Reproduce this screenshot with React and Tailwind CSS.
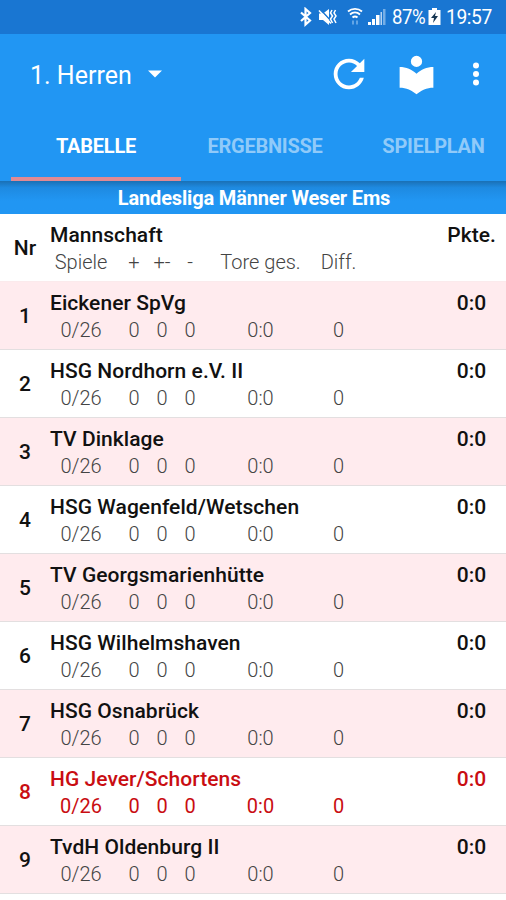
const teams = [
  "Eickener SpVg",
  "HSG Nordhorn e.V. II",
  "TV Dinklage",
  "HSG Wagenfeld/Wetschen",
  "TV Georgsmarienhütte",
  "HSG Wilhelmshaven",
  "HSG Osnabrück",
  "HG Jever/Schortens",
  "TvdH Oldenburg II",
];

function StatusBar() {
  return (
    <div className="flex h-[34px] items-center bg-[#1976d2] pl-[299px] text-white">
      <svg className="h-[20px] w-[14px] shrink-0" viewBox="0 0 14 20" fill="none" stroke="#fff" strokeWidth="2.2">
        <path d="M2 5.500l9 8-4.500 4V2l4.500 4-9 8" />
      </svg>
      <svg className="ml-[5px] h-[20px] w-[20px] shrink-0" viewBox="0 0 20 20" fill="#fff">
        <path d="M1 6.500h4l6-4.500v16l-6-5H1z" />
        <path d="M2 2l11 12" stroke="#1976d2" strokeWidth="1.400" />
        <path d="M1 3.500L13 16.500" stroke="#fff" strokeWidth="1.600" />
        <path d="M14 3l-1.500 3 2 3-2 3 2 4M17.500 3L16 6l2 3-2 3 2 4" fill="none" stroke="#fff" strokeWidth="1.500" />
      </svg>
      <svg className="ml-[9px] h-[20px] w-[16px] shrink-0" viewBox="0 0 16 20" fill="none" stroke="#fff" strokeWidth="1.900">
        <path d="M1 4.500c4-3.500 10-3.500 14 0M3 7.500c3-2.600 7-2.600 10 0M5.500 10.500c1.500-1.300 3.500-1.300 5 0" />
        <path d="M6 13.500v4M10 13.500v4" stroke="#63a5e6" strokeWidth="2" />
      </svg>
      <svg className="ml-[5px] h-[20px] w-[18px] shrink-0" viewBox="0 0 18 20" fill="#fff">
        <path d="M0 15h3v3H0zM4 12h3v6H4zM8 8h3.500v10H8z" />
        <path d="M12.500 5H14v13h-1.500z" fill="#b5d4f3" />
        <path d="M15 2h2.500v16H15z" fill="#75aee6" />
      </svg>
      <span className="ml-[6px] w-[35px] origin-left scale-x-[0.93] text-[20px] leading-[35px] tracking-[-0.500px]">87%</span>
      <svg className="ml-[1px] h-[20px] w-[13px] shrink-0" viewBox="0 0 13 20" fill="#fff">
        <path d="M4 1h5v2h3.500v15H0.500V3H4z" />
        <path d="M8 5l-5 6h3l-1 5 5-7H7z" fill="#163652" />
      </svg>
      <span className="ml-[5px] w-[50px] origin-left scale-x-[0.96] text-[20px] leading-[35px] tracking-[-0.400px]">19:57</span>
    </div>
  );
}

function Toolbar() {
  return (
    <div className="flex h-[80px] items-center text-white">
      <span className="ml-[30px] w-[102px] pt-[3px] text-[25px] leading-[80px]">1. Herren</span>
      <svg className="ml-[16px] h-[8px] w-[14px]" viewBox="0 0 14 8" fill="#fff"><path d="M0 0.500h14L7 7.500z" /></svg>
      <svg className="ml-[164px] h-[46px] w-[46px]" viewBox="0 0 24 24" fill="#fff">
        <path d="M17.650 6.350C16.200 4.900 14.210 4 12 4c-4.420 0-7.990 3.580-7.990 8s3.570 8 7.990 8c3.730 0 6.840-2.550 7.730-6h-2.080c-.820 2.330-3.040 4-5.650 4-3.310 0-6-2.690-6-6s2.690-6 6-6c1.660 0 3.140.690 4.220 1.780L13 11h7V4l-2.350 2.350z" />
      </svg>
      <svg className="ml-[22px] h-[45px] w-[45px]" viewBox="0 0 24 24" fill="#fff">
        <path d="M12 11.550C9.640 9.350 6.480 8 3 8v11c3.480 0 6.640 1.350 9 3.550 2.360-2.190 5.520-3.550 9-3.550V8c-3.480 0-6.640 1.350-9 3.550zM12 8a3 3 0 1 0 0-6 3 3 0 0 0 0 6z" />
      </svg>
      <svg className="ml-[32px] h-[24px] w-[10px]" viewBox="0 0 10 24" fill="#fff">
        <circle cx="5" cy="3.500" r="3" /><circle cx="5" cy="12" r="3" /><circle cx="5" cy="20.500" r="3" />
      </svg>
    </div>
  );
}

function Tabs() {
  return (
    <div className="flex h-[67px] pl-[11px] text-[20px] font-bold leading-[64px] tracking-[-0.250px] text-[#90caf9]">
      <div className="w-[170px] border-b-4 border-[#e08a94] text-center text-white">TABELLE</div>
      <div className="w-[168px] text-center">ERGEBNISSE</div>
      <div className="w-[157px] pl-[12px] text-center whitespace-nowrap">SPIELPLAN</div>
    </div>
  );
}

function Row({ nr, name, points, stats, className, statClass }) {
  return (
    <div className={`flex h-[68px] border-b pt-[7px] text-[21px] leading-[28px] ${className}`}>
      <div className="w-[50px] text-center font-medium leading-[55px]">{nr}</div>
      <div className="w-[390px]">
        <div className="h-[28px] font-medium tracking-[0.050px] whitespace-nowrap">{name}</div>
        <div className={`flex h-[28px] text-center text-[20px] leading-[27px] whitespace-nowrap ${statClass}`}>
          <div className="mr-[8px] w-[62px]">{stats[0]}</div>
          <div className="w-[28px]">{stats[1]}</div>
          <div className="w-[28px]">{stats[2]}</div>
          <div className="w-[28px]">{stats[3]}</div>
          <div className="w-[113px]">{stats[4]}</div>
          <div className="w-[43px]">{stats[5]}</div>
        </div>
      </div>
      <div className="w-[63px] text-center font-medium">{points}</div>
    </div>
  );
}

export default function App() {
  return (
    <div className="h-[900px] w-[506px] overflow-hidden bg-white font-['Roboto',sans-serif]">
      <StatusBar />
      <div className="bg-[#2196f3]">
        <Toolbar />
        <Tabs />
      </div>
      <div className="h-[33px] bg-[#2196f3] bg-linear-to-b from-[#1a70b5] via-[#1e8ae1] via-20% to-[#2196f3] to-60% pl-[2px] text-center text-[20px] font-bold leading-[34px] tracking-[-0.160px] text-white">
        Landesliga Männer Weser Ems
      </div>
      <Row
        nr="Nr"
        name="Mannschaft"
        points="Pkte."
        stats={["Spiele", "+", "+-", "-", "Tore ges.", "Diff."]}
        className="border-[#fbeaec] bg-white text-[#111111]"
        statClass="font-light text-[#444444]"
      />
      {teams.map((name, i) => (
        <Row
          key={name}
          nr={i + 1}
          name={name}
          points="0:0"
          stats={["0/26", "0", "0", "0", "0:0", "0"]}
          className={`border-[#e3dfe0] ${i % 2 === 0 ? "bg-[#ffebee]" : "bg-white"} ${i === 7 ? "text-[#c90d12]" : "text-[#111111]"}`}
          statClass={i === 7 ? "font-normal" : "font-light text-[#444444]"}
        />
      ))}
    </div>
  );
}
